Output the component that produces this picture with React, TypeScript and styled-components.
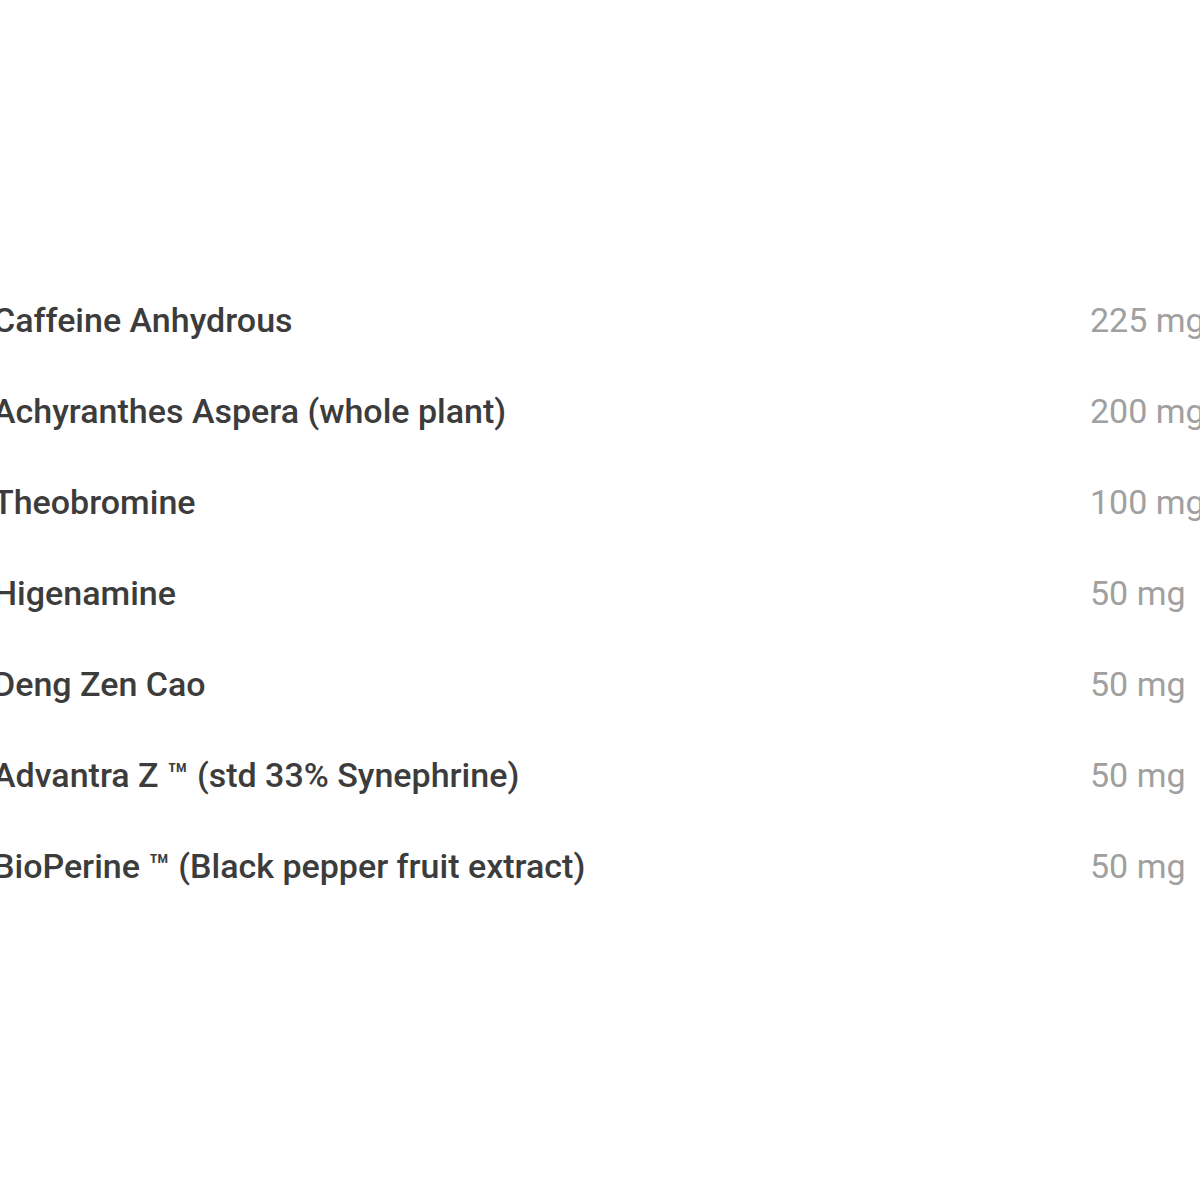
import React from "react";
import styled, { createGlobalStyle } from "styled-components";

const Global = createGlobalStyle`
  html, body { margin: 0; padding: 0; background: #ffffff; overflow: hidden; }
  body { width: 1200px; height: 1200px; }
`;

const Page = styled.div`
  width: 1200px;
  height: 1200px;
  overflow: hidden;
  background: #fff;
  padding-top: 274px;
  box-sizing: border-box;
`;

const Table = styled.div`
  display: grid;
  grid-template-columns: 1097px 200px;
  grid-auto-rows: 91px;
  margin-left: -7px;
  font-family: Roboto, "Liberation Sans", Arial, sans-serif;
  font-size: 34px;
`;

const Name = styled.div`
  display: flex;
  align-items: center;
  color: #3c3c3c;
  font-weight: 500;
  white-space: nowrap;
`;

const Amount = styled.div`
  display: flex;
  align-items: center;
  color: #a0a0a0;
  font-weight: 400;
  white-space: nowrap;
`;

const rows: [string, string][] = [
  ["Caffeine Anhydrous", "225 mg"],
  ["Achyranthes Aspera (whole plant)", "200 mg"],
  ["Theobromine", "100 mg"],
  ["Higenamine", "50 mg"],
  ["Deng Zen Cao", "50 mg"],
  ["Advantra Z \u2122 (std 33% Synephrine)", "50 mg"],
  ["BioPerine \u2122 (Black pepper fruit extract)", "50 mg"],
];

export default function App() {
  return (
    <Page>
      <Global />
      <Table>
        {rows.map(([n, a]) => (
          <React.Fragment key={n}>
            <Name>{n}</Name>
            <Amount>{a}</Amount>
          </React.Fragment>
        ))}
      </Table>
    </Page>
  );
}
